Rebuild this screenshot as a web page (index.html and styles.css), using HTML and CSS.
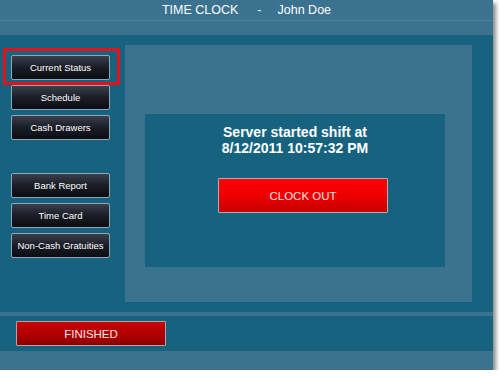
FILE: index.html
```html
<!DOCTYPE html>
<html lang="en">
<head>
  <meta charset="UTF-8">
  <title>Time Clock</title>
  <link rel="stylesheet" href="styles.css">
</head>
<body>

  <div class="window">
    <div class="titleBar">
      <span>TIME CLOCK</span>
      <span class="dash">-</span>
      <span>John Doe</span>
    </div>
    <div class="subBar"></div>

    <div class="content">
      <div class="sidebar">
        <div class="navGroup">
          <button class="navBtn current">Current Status</button>
          <button class="navBtn">Schedule</button>
          <button class="navBtn">Cash Drawers</button>
        </div>
        <div class="navGroup">
          <button class="navBtn">Bank Report</button>
          <button class="navBtn">Time Card</button>
          <button class="navBtn">Non-Cash Gratuities</button>
        </div>
      </div>

      <div class="mainPanel">
        <div class="statusBox">
          <p class="statusText">Server started shift at<br>8/12/2011 10:57:32 PM</p>
          <button class="clockOutBtn">CLOCK OUT</button>
        </div>
      </div>
    </div>

    <div class="divider"></div>
    <div class="footer">
      <button class="finishedBtn">FINISHED</button>
    </div>
    <div class="bottomBar"></div>
  </div>

</body>
</html>
```

FILE: styles.css
```css
body {
  margin: 0;
  background-color: #fff;
  font-family: 'Liberation Sans', Arial, sans-serif;
}

.window {
  width: 493px;
  height: 370px;
  background-color: #17637f;
  box-shadow: 3px 3px 4px rgba(0, 0, 0, 0.45);
  display: flex;
  flex-direction: column;
}

.titleBar {
  height: 20px;
  border-bottom: 1px solid #4a7f9b;
  background-color: #3a7290;
  color: #fff;
  font-size: 12.5px;
  display: flex;
  justify-content: center;
  align-items: center;
}

.titleBar .dash {
  margin: 0 16px 0 19px;
}

.subBar {
  height: 14px;
  background-color: #3a7290;
}

.content {
  height: 277px;
  display: flex;
}

.sidebar {
  width: 125px;
  padding-top: 20px;
  box-sizing: border-box;
}

.navGroup {
  display: flex;
  flex-direction: column;
  gap: 5px;
  margin-left: 11px;
  margin-bottom: 33px;
}

.navBtn {
  width: 99px;
  height: 25px;
  padding: 0;
  border: 1px solid #8ea7b6;
  border-radius: 2px;
  background: linear-gradient(#3b3f4b, #1a1d26 50%, #0b0d13);
  color: #fff;
  font-family: 'Liberation Sans', Arial, sans-serif;
  font-size: 9.5px;
}

.navBtn.current {
  position: relative;
}

.navBtn.current::after {
  content: '';
  position: absolute;
  left: -9px;
  top: -8px;
  right: -11px;
  bottom: -6px;
  border: 3.5px solid #e3121b;
}

.mainPanel {
  width: 347px;
  margin: 10px 0;
  padding: 69px 27px 35px 20px;
  box-sizing: border-box;
  background-color: #3a7290;
}

.statusBox {
  height: 153px;
  background-color: #17637f;
  display: flex;
  flex-direction: column;
  align-items: center;
  padding-top: 10px;
  box-sizing: border-box;
}

.statusText {
  margin: 0;
  color: #fff;
  font-size: 14px;
  font-weight: bold;
  line-height: 16px;
  text-align: center;
}

.clockOutBtn {
  margin: 22px 0 0 16px;
  width: 170px;
  height: 35px;
  border: 1px solid #a9b0b6;
  border-radius: 1px;
  background: linear-gradient(#ff0000, #f00000 45%, #c80000);
  color: #ffe0e0;
  font-family: 'Liberation Sans', Arial, sans-serif;
  font-size: 11.5px;
}

.divider {
  height: 4px;
  background-color: #3a7290;
}

.footer {
  height: 35px;
  padding: 5px 0 0 16px;
  box-sizing: border-box;
}

.finishedBtn {
  width: 150px;
  height: 25px;
  border: 1px solid #b0a4a8;
  border-radius: 1px;
  background: linear-gradient(#c60000, #b40000 50%, #8c0000);
  color: #ffe6e6;
  font-family: 'Liberation Sans', Arial, sans-serif;
  font-size: 11.5px;
}

.bottomBar {
  flex: 1;
  background-color: #3a7290;
}
```
